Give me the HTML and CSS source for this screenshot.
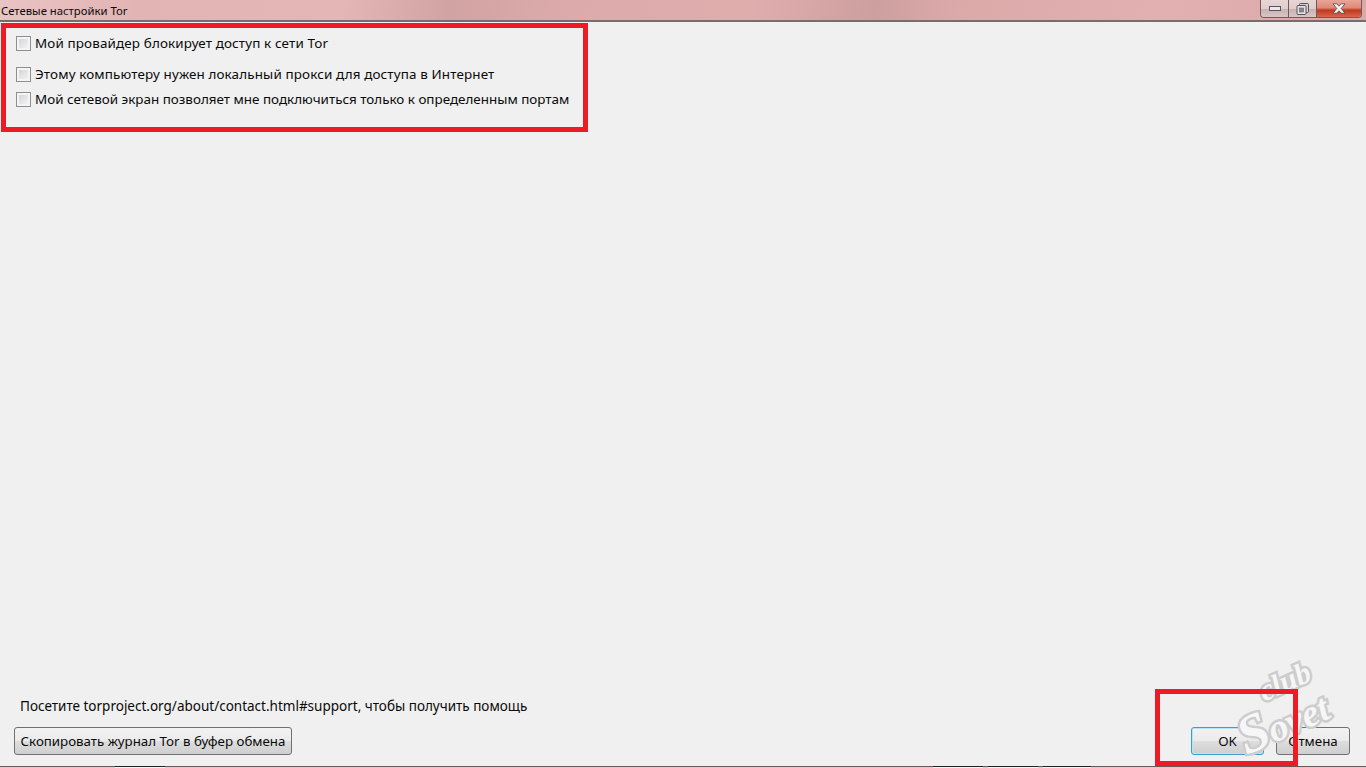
FILE: index.html
```html
<!DOCTYPE html>
<html lang="ru">
<head>
    <meta charset="UTF-8">
    <title>Сетевые настройки Tor</title>
    <link rel="stylesheet" href="styles.css">
</head>
<body class="body">
    <div class="window">
        <div class="titlebar">
            <span class="title">Сетевые настройки Tor</span>
            <div class="controls">
                <div class="ctl ctlMin"><span class="minBar"></span></div>
                <div class="ctl ctlMax">
                    <svg width="13" height="12" viewBox="0 0 13 12">
                        <rect x="3.5" y="0.5" width="9" height="9" rx="1" fill="#d8cccc" stroke="#4f5560"/>
                        <rect x="1" y="2.5" width="9" height="9" rx="1" fill="#e9e1e1" stroke="#4f5560"/>
                        <rect x="3.5" y="5" width="4" height="4" fill="#8d8686" stroke="#5a5f68" stroke-width="0.6"/>
                    </svg>
                </div>
                <div class="ctl ctlClose">
                    <svg width="14" height="11" viewBox="0 0 14 11">
                        <path d="M1 .8 L4.8 .8 L7 3.2 L9.2 .8 L13 .8 L9.2 5.5 L13 10.2 L9.2 10.2 L7 7.8 L4.8 10.2 L1 10.2 L4.8 5.5 Z" fill="#f3f0f0" stroke="#4a4a55" stroke-width="0.8"/>
                    </svg>
                </div>
            </div>
        </div>

        <div class="content">
            <div class="options">
                <label class="opt opt1"><span class="check"></span>Мой провайдер блокирует доступ к сети Tor</label>
                <label class="opt opt2"><span class="check"></span>Этому компьютеру нужен локальный прокси для доступа в Интернет</label>
                <label class="opt opt3"><span class="check"></span>Мой сетевой экран позволяет мне подключиться только к определенным портам</label>
            </div>

            <div class="bottom">
                <p class="help">Посетите torproject.org/about/contact.html#support, чтобы получить помощь</p>
                <div class="buttons">
                    <button class="btn btnCopy">Скопировать журнал Tor в буфер обмена</button>
                    <div class="right">
                        <button class="btn btnOk">OK</button>
                        <button class="btn btnCancel">Отмена</button>
                    </div>
                </div>
            </div>
        </div>
        <div class="strip">
            <span class="seg seg1"></span>
            <span class="seg seg2"></span>
            <span class="seg seg3"></span>
            <span class="seg seg4"></span>
        </div>
    </div>

    <!-- red marks and the watermark lie over the window -->
    <div class="stamp">
        <span class="stampClub">club</span>
        <span class="stampSovet"><span class="stampS">S</span>ovet</span>
    </div>
    <div class="mark markTop"></div>
    <div class="mark markOk"></div>
</body>
</html>
```

FILE: styles.css
```css
.body{
    margin: 0;
    background-color: #f0f0f0;
    font-family: "Noto Sans", sans-serif;
    color: #0a0a0a;
    overflow: hidden;
}
.window{
    height: 768px;
    display: flex;
    flex-direction: column;
}
.titlebar{
    height: 20px;
    flex: none;
    display: flex;
    justify-content: space-between;
    background: linear-gradient(100deg, #e9c4c4 0%, #e3b4b4 10%, #e5b6b6 25%, #d2a3a3 33%, #dcaaaa 42%, #e0adad 55%, #cd9f9f 64%, #dca9a9 70%, #e2b0b0 85%, #d9a8a8 100%);
    border-bottom: 2px solid #7d6a6b;
}
.title{
    font-size: 11.3px;
    line-height: 21px;
    padding-left: 1px;
}
.controls{
    display: flex;
    height: 17px;
    margin-right: 4px;
    border: 1px solid #6f5a5c;
    border-top: none;
    border-radius: 0 0 4px 4px;
    overflow: hidden;
}
.ctl{
    display: flex;
    align-items: center;
    justify-content: center;
    background: linear-gradient(#e8d5d5 0%, #e2cccc 50%, #c9b2b2 55%, #d8c6c6 100%);
}
.ctlMin{
    width: 27px;
    border-right: 1px solid #6f5a5c;
}
.ctlMax{
    width: 27px;
    border-right: 1px solid #6f5a5c;
}
.ctlClose{
    width: 44px;
    background: linear-gradient(#e9a598 0%, #e08a78 45%, #c0391f 60%, #d9664a 100%);
}
.minBar{
    width: 10px;
    height: 3px;
    background-color: #ece6e6;
    border: 1px solid #50566a;
}
.content{
    flex: 1;
    display: flex;
    flex-direction: column;
    justify-content: space-between;
}
.options{
    padding: 11px 0 0 16px;
}
.opt{
    display: flex;
    align-items: center;
    gap: 4px;
    font-size: 13.43px;
    line-height: 20px;
}
.opt1{
    letter-spacing: .14px;
}
.opt2{
    margin-top: 11px;
    letter-spacing: .14px;
}
.opt3{
    margin-top: 5px;
}
.check{
    width: 9px;
    height: 9px;
    border: 2px solid #f4f4f4;
    outline: 1px solid #8e8f8f;
    margin: 1px;
    background: linear-gradient(135deg, #d4d5d6, #f2f2f3);
}
.bottom{
    padding: 0 16px 11px 14px;
}
.help{
    margin: 0 0 10px 6px;
    font-size: 13.5px;
    line-height: 21px;
}
.buttons{
    display: flex;
    justify-content: space-between;
}
.right{
    display: flex;
    gap: 12px;
}
.btn{
    height: 28px;
    padding: 0;
    font-family: "Noto Sans", sans-serif;
    font-size: 13.3px;
    color: #0a0a0a;
    border: 1px solid #707070;
    border-radius: 3px;
    background: linear-gradient(#f2f2f2 0%, #ebebeb 48%, #dddddd 52%, #cfcfcf 100%);
}
.btnCopy{
    width: 278px;
}
.btnOk{
    width: 73px;
    border-color: #3c9fd0;
    box-shadow: inset 0 0 0 1px #b5e4f7;
}
.btnCancel{
    width: 74px;
}
.strip{
    height: 1px;
    flex: none;
    position: relative;
    background-color: #e6c8c8;
    border-top: 1px solid #6e5557;
}
.seg{
    position: absolute;
    top: -1px;
    height: 2px;
    background-color: #f4f4f4;
    border-top: 1px solid #222;
    box-sizing: border-box;
}
.seg1{
    left: 115px;
    width: 50px;
}
.seg2{
    left: 933px;
    width: 50px;
}
.seg3{
    left: 988px;
    width: 50px;
}
.seg4{
    left: 1043px;
    width: 48px;
}
.mark{
    position: absolute;
    border: 5px solid #ed1c24;
}
.markTop{
    left: 1px;
    top: 23px;
    width: 577px;
    height: 99px;
}
.markOk{
    left: 1155px;
    top: 689px;
    width: 133px;
    height: 67px;
}
.stamp{
    position: absolute;
    left: 1230px;
    top: 666px;
    width: 110px;
    height: 70px;
    transform: rotate(-24deg);
    font-family: "Liberation Serif", serif;
    font-style: italic;
    font-weight: bold;
    color: #f6f6f6;
    -webkit-text-stroke: 5px #cdcdcd;
    paint-order: stroke fill;
}
.stampClub{
    position: absolute;
    left: 36px;
    top: 0;
    font-size: 30px;
}
.stampSovet{
    position: absolute;
    left: -2px;
    top: 20px;
    font-size: 38px;
    white-space: nowrap;
}
.stampS{
    font-size: 54px;
}
```
